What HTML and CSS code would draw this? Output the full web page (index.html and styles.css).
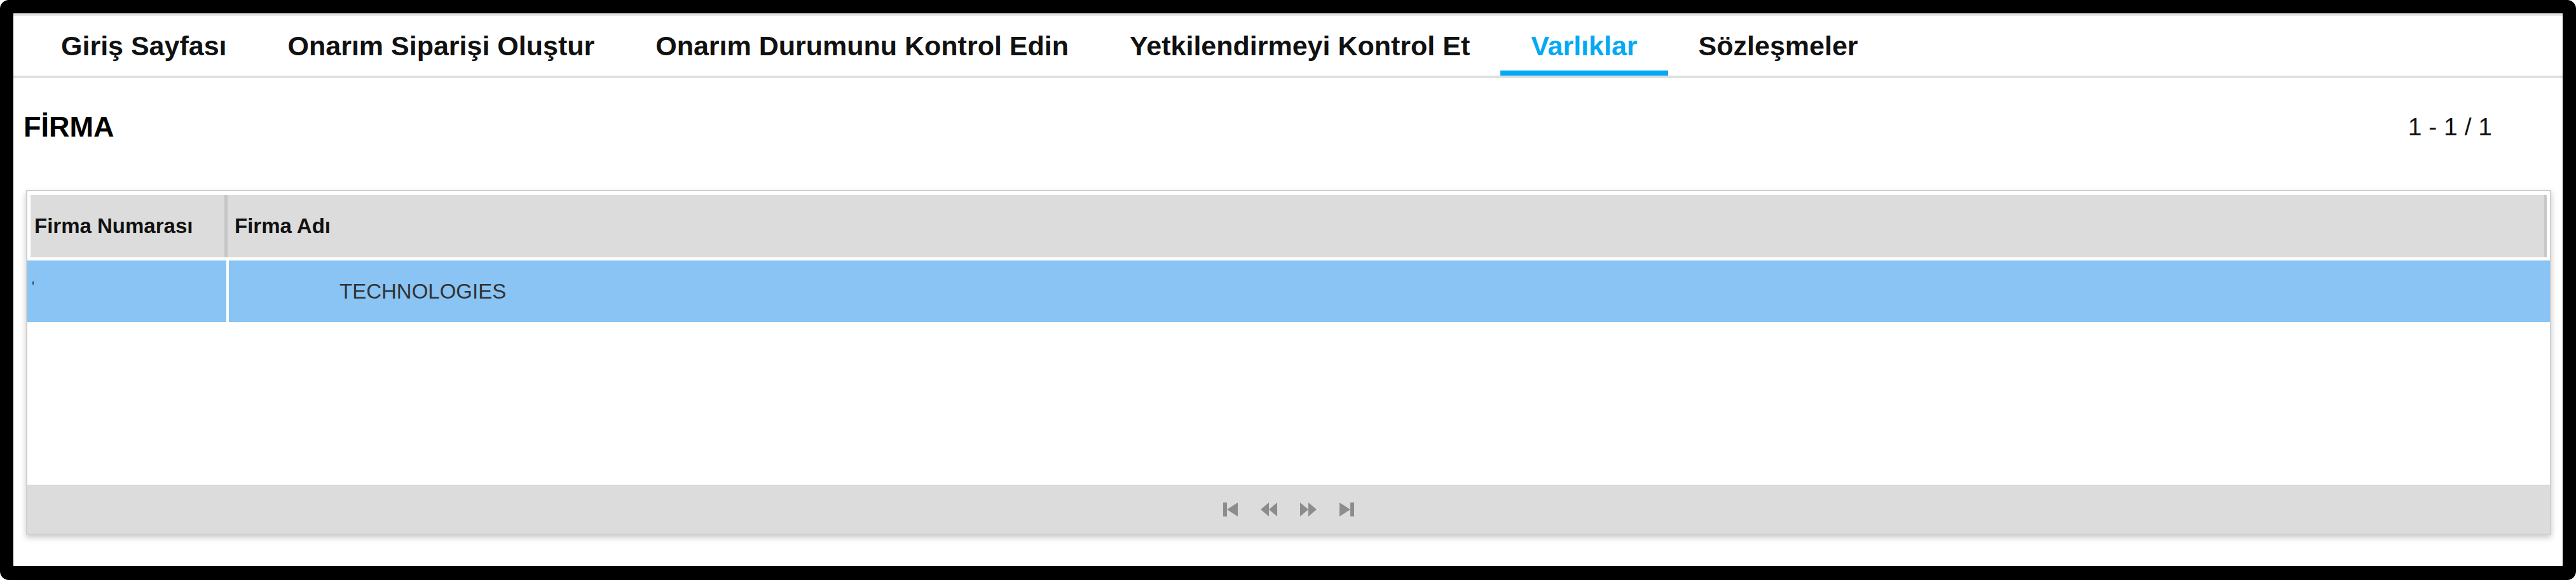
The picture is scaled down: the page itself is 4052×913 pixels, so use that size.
FILE: index.html
```html
<!DOCTYPE html>
<html lang="tr">
<head>
<meta charset="utf-8">
<title>Varlıklar - Firma</title>
<link rel="stylesheet" href="styles.css">
</head>
<body>
<div class="frame">
  <nav class="tabs">
    <a class="tab">Giriş Sayfası</a>
    <a class="tab">Onarım Siparişi Oluştur</a>
    <a class="tab">Onarım Durumunu Kontrol Edin</a>
    <a class="tab">Yetkilendirmeyi Kontrol Et</a>
    <a class="tab active">Varlıklar</a>
    <a class="tab">Sözleşmeler</a>
  </nav>
  <main class="content">
    <div class="titlebar">
      <h1 class="title">FİRMA</h1>
      <span class="count">1 - 1 / 1</span>
    </div>
    <div class="grid">
      <div class="grid-head">
        <div class="th col1">Firma Numarası</div>
        <div class="th col2">Firma Adı</div>
      </div>
      <div class="grid-body">
        <div class="row selected">
          <div class="td col1"><span class="mark"></span></div>
          <div class="td col2"><span class="name">TECHNOLOGIES</span></div>
        </div>
      </div>
      <div class="grid-foot">
        <svg class="pg" width="23" height="22" viewBox="0 0 23 22"><rect x="0" y="0" width="6" height="22"/><polygon points="23,0 23,22 6,11"/></svg>
        <svg class="pg" width="26" height="22" viewBox="0 0 26 22"><polygon points="13,0 13,22 0,11"/><polygon points="26,0 26,22 13,11"/></svg>
        <svg class="pg" width="26" height="22" viewBox="0 0 26 22"><polygon points="0,0 0,22 13,11"/><polygon points="13,0 13,22 26,11"/></svg>
        <svg class="pg" width="23" height="22" viewBox="0 0 23 22"><polygon points="0,0 0,22 17,11"/><rect x="17" y="0" width="6" height="22"/></svg>
      </div>
    </div>
  </main>
</div>
</body>
</html>
```

FILE: styles.css
```css
html, body {
  margin: 0;
  padding: 0;
  background: #ffffff;
}

body {
  font-family: "Liberation Sans", Arial, sans-serif;
  color: #111111;
}

.frame {
  box-sizing: border-box;
  width: 4052px;
  height: 913px;
  border: 21px solid #000000;
  border-bottom-width: 22px;
  border-radius: 14px;
  background: #ffffff;
  display: flex;
  flex-direction: column;
}

/* ---------- tabs ---------- */
.tabs {
  display: flex;
  align-items: stretch;
  height: 94px;
  padding-left: 27px;
  border-top: 4px solid #e6e6e6;
  border-bottom: 4px solid #dfdfdf;
  background: #ffffff;
}

.tab {
  display: flex;
  align-items: center;
  padding: 0 48px;
  font-size: 43px;
  font-weight: bold;
  color: #111111;
  text-decoration: none;
  white-space: nowrap;
}

.tab.active {
  color: #03a9f4;
  box-shadow: inset 0 -8px 0 #03a9f4;
}

/* ---------- content ---------- */
.content {
  flex: 1;
  padding-top: 51px;
}

.titlebar {
  display: flex;
  align-items: center;
  justify-content: space-between;
  padding: 0 111px 0 16px;
  height: 52px;
}

.title {
  margin: 0;
  font-size: 45px;
  line-height: 52px;
  font-weight: bold;
  color: #000000;
}

.count {
  font-size: 39px;
  line-height: 52px;
  color: #111111;
}

/* ---------- grid ---------- */
.grid {
  margin: 73px 18px 0 20px;
  border: 2px solid #d0d0d0;
  background: #ffffff;
  box-shadow: 0 4px 9px rgba(0, 0, 0, 0.22);
}

.grid-head {
  display: flex;
  height: 98px;
  margin: 6px 5px 0 5px;
  background: #dcdcdc;
}

.th {
  box-sizing: border-box;
  display: flex;
  align-items: center;
  font-size: 33px;
  font-weight: bold;
  color: #111111;
  white-space: nowrap;
}

.th.col1 {
  width: 310px;
  padding-left: 6px;
  border-right: 5px solid #c6c6c6;
}

.th.col2 {
  flex: 1;
  padding-left: 11px;
  border-right: 4px solid #c6c6c6;
}

.grid-body {
  height: 358px;
  padding-top: 5px;
  box-sizing: border-box;
}

.row {
  display: flex;
  height: 97px;
}

.row.selected {
  background: #89c4f4;
}

.td {
  box-sizing: border-box;
  display: flex;
  align-items: center;
  font-size: 33px;
  color: #333333;
}

.td.col1 {
  width: 317px;
  padding-left: 8px;
  border-right: 4px solid #ffffff;
}

.td.col2 {
  flex: 1;
  padding-left: 174px;
}

.mark {
  display: block;
  width: 2px;
  height: 5px;
  margin-top: -26px;
  background: #3a4a5a;
}

.grid-foot {
  display: flex;
  align-items: center;
  justify-content: center;
  gap: 36px;
  height: 77px;
  box-sizing: border-box;
  border-top: 1px solid #d4d4d4;
  background: #dcdcdc;
}

.pg {
  display: block;
  fill: #8c8c8c;
}
```
